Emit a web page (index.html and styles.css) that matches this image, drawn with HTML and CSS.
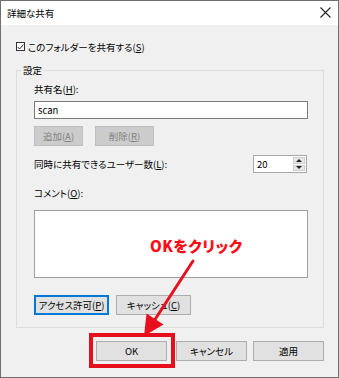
FILE: index.html
```html
<!DOCTYPE html>
<html lang="ja">
<head>
    <meta charset="UTF-8" />
    <title>詳細な共有</title>
    <link rel="stylesheet" href="styles.css">
</head>
<body>
    <div class="dialog">
        <div class="titlebar">
            <span class="title">詳細な共有</span>
            <svg class="close" width="11" height="11" viewBox="0 0 11 11">
                <path d="M0.5 0.5 L10.5 10.5 M10.5 0.5 L0.5 10.5" stroke="#222" stroke-width="1.1" fill="none"/>
            </svg>
        </div>

        <div class="content">
            <label class="check-row">
                <span class="checkbox">
                    <svg width="8" height="8" viewBox="0 0 8 8">
                        <path d="M0.8 4 L3 6.3 L7.3 1.2" stroke="#222" stroke-width="1.1" fill="none"/>
                    </svg>
                </span>
                <span>このフォルダーを共有する(<u>S</u>)</span>
            </label>

            <fieldset class="group">
                <legend>設定</legend>

                <div class="label">共有名(<u>H</u>):</div>
                <div class="textbox">scan</div>

                <div class="btn-row">
                    <span class="btn disabled add">追加(<u>A</u>)</span>
                    <span class="btn disabled remove">削除(<u>R</u>)</span>
                </div>

                <div class="users-row">
                    <span>同時に共有できるユーザー数(<u>L</u>):</span>
                    <div class="spinner">
                        <span class="spin-value">20</span>
                        <div class="spin-btns">
                            <span class="spin-btn"><i class="tri up"></i></span>
                            <span class="spin-btn"><i class="tri down"></i></span>
                        </div>
                    </div>
                </div>

                <div class="label comment-label">コメント(<u>O</u>):</div>
                <div class="textarea"></div>

                <div class="btn-row lower">
                    <span class="btn focused">アクセス許可(<u>P</u>)</span>
                    <span class="btn">キャッシュ(<u>C</u>)</span>
                </div>
            </fieldset>

            <div class="footer">
                <span class="btn ok">OK</span>
                <span class="btn cancel">キャンセル</span>
                <span class="btn apply">適用</span>
            </div>
        </div>

        <!-- annotation drawn over the dialog -->
        <div class="note">OKをクリック</div>
        <svg class="overlay" width="339" height="378" viewBox="0 0 339 378">
            <line x1="193" y1="261" x2="154" y2="321" stroke="#e8101e" stroke-width="3" stroke-linecap="round"/>
            <polygon points="144,336 146.5,313.5 163.5,324.5" fill="#e8101e"/>
            <rect x="91" y="335" width="82" height="31" fill="none" stroke="#e60d1c" stroke-width="4"/>
        </svg>
    </div>
</body>
</html>
```

FILE: styles.css
```css
* {
    margin: 0;
    padding: 0;
    box-sizing: border-box;
}

body {
    width: 339px;
    height: 378px;
    background: #fff;
    font-family: "Noto Sans CJK JP", "Noto Sans", sans-serif;
    font-size: 9.5px;
    line-height: 12px;
    color: #000;
    font-feature-settings: "palt";
}

u {
    text-decoration: underline;
    text-underline-offset: 1px;
}

.dialog {
    position: relative;
    width: 339px;
    height: 378px;
    border: 1px solid #6f6f6f;
    display: flex;
    flex-direction: column;
}

.titlebar {
    height: 24px;
    background: #fff;
    display: flex;
    align-items: center;
    justify-content: space-between;
    padding: 0 6px 0 6px;
}

.title {
    font-size: 9.5px;
}

.close {
    margin-right: 1px;
    margin-top: -1px;
}

.content {
    flex: 1;
    background: #f0f0f0;
    padding: 16px 14px 0 15px;
}

.check-row {
    display: flex;
    align-items: center;
    gap: 3px;
    height: 11px;
}

.checkbox {
    width: 9px;
    height: 9px;
    border: 1px solid #333;
    background: #fff;
    display: flex;
    align-items: center;
    justify-content: center;
}

.group {
    margin-top: 12px;
    border: 1px solid #dcdcdc;
    padding: 7px 15px 12px 17px;
}

.group legend {
    margin-left: -13px;
    padding: 0 2px;
}

.label {
    height: 12px;
}

.textbox {
    margin-top: 6px;
    height: 18px;
    background: #fff;
    border: 1px solid #7a7a7a;
    padding: 2px 3px;
    line-height: 13px;
}

.btn {
    display: flex;
    align-items: center;
    justify-content: center;
    height: 20px;
    background: #e1e1e1;
    border: 1px solid #adadad;
}

.btn.disabled {
    background: #cccccc;
    border-color: #bfbfbf;
    color: #838383;
}

.btn-row {
    display: flex;
    gap: 12px;
    margin-top: 7px;
}

.add {
    width: 49px;
}

.remove {
    width: 59px;
}

.users-row {
    display: flex;
    justify-content: space-between;
    align-items: center;
    margin-top: 9px;
    padding-right: 1px;
}

.spinner {
    display: flex;
    height: 18px;
    width: 54px;
    border: 1px solid #a8a8a8;
    background: #fff;
}

.spin-value {
    flex: 1;
    padding: 2px 3px;
    line-height: 13px;
}

.spin-btns {
    width: 14px;
    display: flex;
    flex-direction: column;
    gap: 1px;
    padding: 1px;
    background: #fff;
}

.spin-btn {
    flex: 1;
    background: #e5e5e5;
    border: 1px solid #cfcfcf;
    display: flex;
    align-items: center;
    justify-content: center;
}

.tri {
    width: 0;
    height: 0;
    border-left: 3px solid transparent;
    border-right: 3px solid transparent;
}

.tri.up {
    border-bottom: 3px solid #222;
}

.tri.down {
    border-top: 3px solid #222;
}

.comment-label {
    margin-top: 14px;
}

.textarea {
    margin-top: 11px;
    height: 68px;
    background: #fff;
    border: 1px solid #a0a0a0;
}

.btn-row.lower {
    gap: 7px;
    margin-top: 17px;
}

.btn-row.lower .btn {
    width: 75px;
}

.btn.focused {
    border: 1px solid #0078d7;
    box-shadow: inset 0 0 0 1px #0078d7;
}

.footer {
    display: flex;
    justify-content: flex-end;
    margin-top: 13px;
}

.footer .btn {
    width: 71px;
    height: 20px;
}

.cancel {
    margin-left: 9px;
}

.apply {
    margin-left: 6px;
}

.note {
    position: absolute;
    left: 149px;
    top: 236px;
    font-size: 15px;
    line-height: 18px;
    font-weight: 900;
    color: #ff0a14;
    letter-spacing: 0.5px;
}

.overlay {
    position: absolute;
    left: -1px;
    top: -1px;
}
```
